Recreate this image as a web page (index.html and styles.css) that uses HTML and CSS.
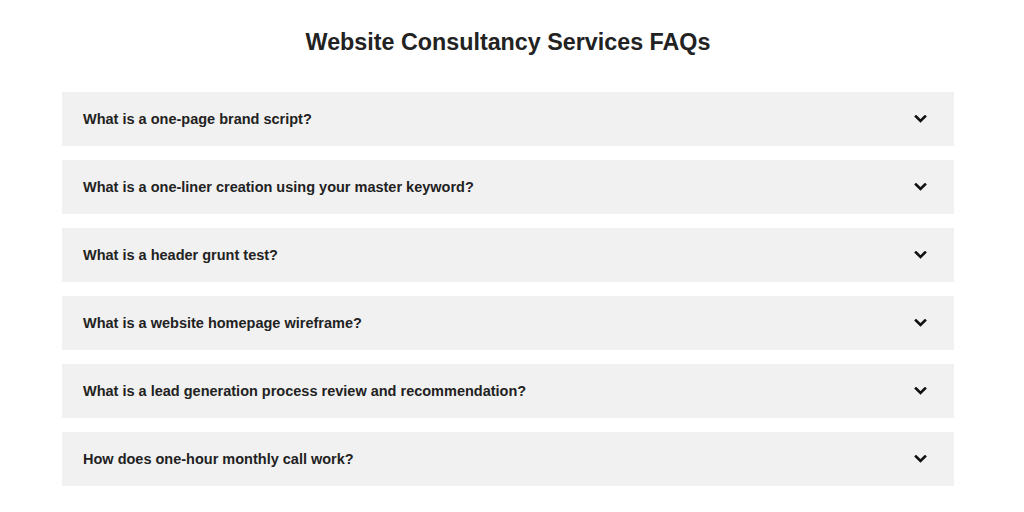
FILE: index.html
```html
<!DOCTYPE html>
<html lang="en">
<head>
    <meta charset="UTF-8">
    <title>Website Consultancy Services FAQs</title>
    <link rel="stylesheet" href="styles.css">
</head>
<body>

<section class="faq">
    <h2 class="faq-title">Website Consultancy Services FAQs</h2>

    <div class="faq-list">
        <div class="faq-item">
            <span class="faq-question">What is a one-page brand script?</span>
            <svg class="faq-icon" viewBox="0 0 13 8"><path d="M2 1.5l4.5 4.5 4.5-4.5"/></svg>
        </div>
        <div class="faq-item">
            <span class="faq-question">What is a one-liner creation using your master keyword?</span>
            <svg class="faq-icon" viewBox="0 0 13 8"><path d="M2 1.5l4.5 4.5 4.5-4.5"/></svg>
        </div>
        <div class="faq-item">
            <span class="faq-question">What is a header grunt test?</span>
            <svg class="faq-icon" viewBox="0 0 13 8"><path d="M2 1.5l4.5 4.5 4.5-4.5"/></svg>
        </div>
        <div class="faq-item">
            <span class="faq-question">What is a website homepage wireframe?</span>
            <svg class="faq-icon" viewBox="0 0 13 8"><path d="M2 1.5l4.5 4.5 4.5-4.5"/></svg>
        </div>
        <div class="faq-item">
            <span class="faq-question">What is a lead generation process review and recommendation?</span>
            <svg class="faq-icon" viewBox="0 0 13 8"><path d="M2 1.5l4.5 4.5 4.5-4.5"/></svg>
        </div>
        <div class="faq-item">
            <span class="faq-question">How does one-hour monthly call work?</span>
            <svg class="faq-icon" viewBox="0 0 13 8"><path d="M2 1.5l4.5 4.5 4.5-4.5"/></svg>
        </div>
    </div>
</section>

</body>
</html>
```

FILE: styles.css
```css
body {
    margin: 0 8px 0 0;
    font-family: 'Liberation Sans', Arial, sans-serif;
    background-color: #fff;
    color: #222;
}
.faq {
    width: 892px;
    margin: 0 auto;
    padding-top: 28px;
}
.faq-title {
    margin: 0 0 36px;
    font-size: 23.3px;
    line-height: 28px;
    text-align: center;
    color: #222;
}
.faq-list {
    display: flex;
    flex-direction: column;
    gap: 14px;
}
.faq-item {
    display: flex;
    align-items: center;
    justify-content: space-between;
    height: 54px;
    padding: 0 27px 0 21px;
    background-color: #f1f1f1;
    box-sizing: border-box;
}
.faq-question {
    font-size: 14.5px;
    font-weight: bold;
    color: #222;
}
.faq-icon {
    width: 13px;
    height: 8px;
    fill: none;
    stroke: #111;
    stroke-width: 2.6;
    stroke-linecap: square;
}
```
